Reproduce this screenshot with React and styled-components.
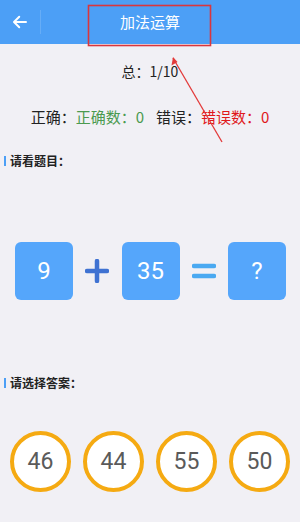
import styled, { createGlobalStyle } from "styled-components";

const GlobalStyle = createGlobalStyle`
  body {
    margin: 0;
    background: #f1f0f5;
    font-family: "Noto Sans CJK SC", Roboto, sans-serif;
  }
`;

const Page = styled.div`
  position: relative;
  width: 300px;
  height: 522px;
  overflow: hidden;
  background: #f1f0f5;
`;

const Header = styled.div`
  height: 44px;
  background: #4c9ff6;
  display: flex;
  align-items: center;
  position: relative;
`;

const Back = styled.div`
  width: 40px;
  height: 24px;
  display: flex;
  align-items: center;
  justify-content: center;
  border-right: 1px solid rgba(255, 255, 255, 0.15);
`;

const Title = styled.div`
  position: absolute;
  left: 0;
  right: 0;
  text-align: center;
  color: #fff;
  font-size: 15px;
  line-height: 44px;
  pointer-events: none;
`;

const Total = styled.div`
  text-align: center;
  font-size: 14px;
  color: #222;
  margin-top: 17px;
  line-height: 20px;
`;

const Score = styled.div`
  text-align: center;
  font-size: 15px;
  color: #222;
  margin-top: 26px;
  line-height: 20px;
`;

const Colored = styled.span`
  color: ${(p) => p.$c};
`;

const Gap = styled.span`
  display: inline-block;
  width: 12px;
`;

const Label = styled.div`
  display: flex;
  align-items: center;
  gap: 4px;
  padding-left: 4px;
  font-size: 12px;
  font-weight: bold;
  color: #222;
  margin-top: ${(p) => p.$mt}px;
  line-height: 16px;

  &::before {
    content: "";
    width: 2px;
    height: 10px;
    background: #4c9ff6;
  }
`;

const Equation = styled.div`
  display: flex;
  align-items: center;
  padding: 0 14px 0 15px;
  margin-top: 73px;
  justify-content: space-between;
`;

const Box = styled.div`
  width: 58px;
  height: 58px;
  border-radius: 6px;
  background: #55a6fb;
  color: #fff;
  font-family: Roboto, sans-serif;
  font-size: 24px;
  display: flex;
  align-items: center;
  justify-content: center;
`;

const Op = styled.div`
  width: 24px;
  display: flex;
  justify-content: center;
`;

const Answers = styled.div`
  display: flex;
  justify-content: space-between;
  padding: 0 10px;
  margin-top: 40px;
`;

const Circle = styled.div`
  width: 53px;
  height: 53px;
  border: 4px solid #f5aa12;
  border-radius: 50%;
  background: #fff;
  color: #5a5a5a;
  font-family: Roboto, sans-serif;
  font-size: 23px;
  display: flex;
  align-items: center;
  justify-content: center;
`;

const Annotation = styled.svg`
  position: absolute;
  left: 0;
  top: 0;
  pointer-events: none;
`;

export default function App() {
  return (
    <Page>
      <GlobalStyle />
      <Header>
        <Back>
          <svg width="18" height="18" viewBox="0 0 24 24" fill="none" stroke="#fff" strokeWidth="2.6" strokeLinecap="round" strokeLinejoin="round">
            <path d="M20 12H5" />
            <path d="M11 5l-7 7 7 7" />
          </svg>
        </Back>
        <Title>加法运算</Title>
      </Header>
      <Total>总：1/10</Total>
      <Score>
        正确：<Colored $c="#4b9a4f">正确数：0</Colored>
        <Gap />
        错误：<Colored $c="#e0191c">错误数：0</Colored>
      </Score>
      <Label $mt={26}>请看题目：</Label>
      <Equation>
        <Box>9</Box>
        <Op>
          <svg width="24" height="24" viewBox="0 0 24 24">
            <path d="M12 2v20M2 12h20" stroke="#3f72d2" strokeWidth="4.5" strokeLinecap="round" />
          </svg>
        </Op>
        <Box>35</Box>
        <Op>
          <svg width="24" height="18" viewBox="0 0 24 18">
            <path d="M2 4h20M2 14h20" stroke="#4aa9f1" strokeWidth="4.5" strokeLinecap="round" />
          </svg>
        </Op>
        <Box>?</Box>
      </Equation>
      <Label $mt={75}>请选择答案：</Label>
      <Answers>
        <Circle>46</Circle>
        <Circle>44</Circle>
        <Circle>55</Circle>
        <Circle>50</Circle>
      </Answers>
      <Annotation width="300" height="522">
        <rect x="88.5" y="5.5" width="122" height="40" fill="none" stroke="#d9363e" strokeWidth="1.6" />
        <path d="M173 58L222 142" stroke="#e33a3a" strokeWidth="1.3" />
        <path d="M173 57l-1.5 8.5 6-3.5z" fill="#e33a3a" />
      </Annotation>
    </Page>
  );
}
